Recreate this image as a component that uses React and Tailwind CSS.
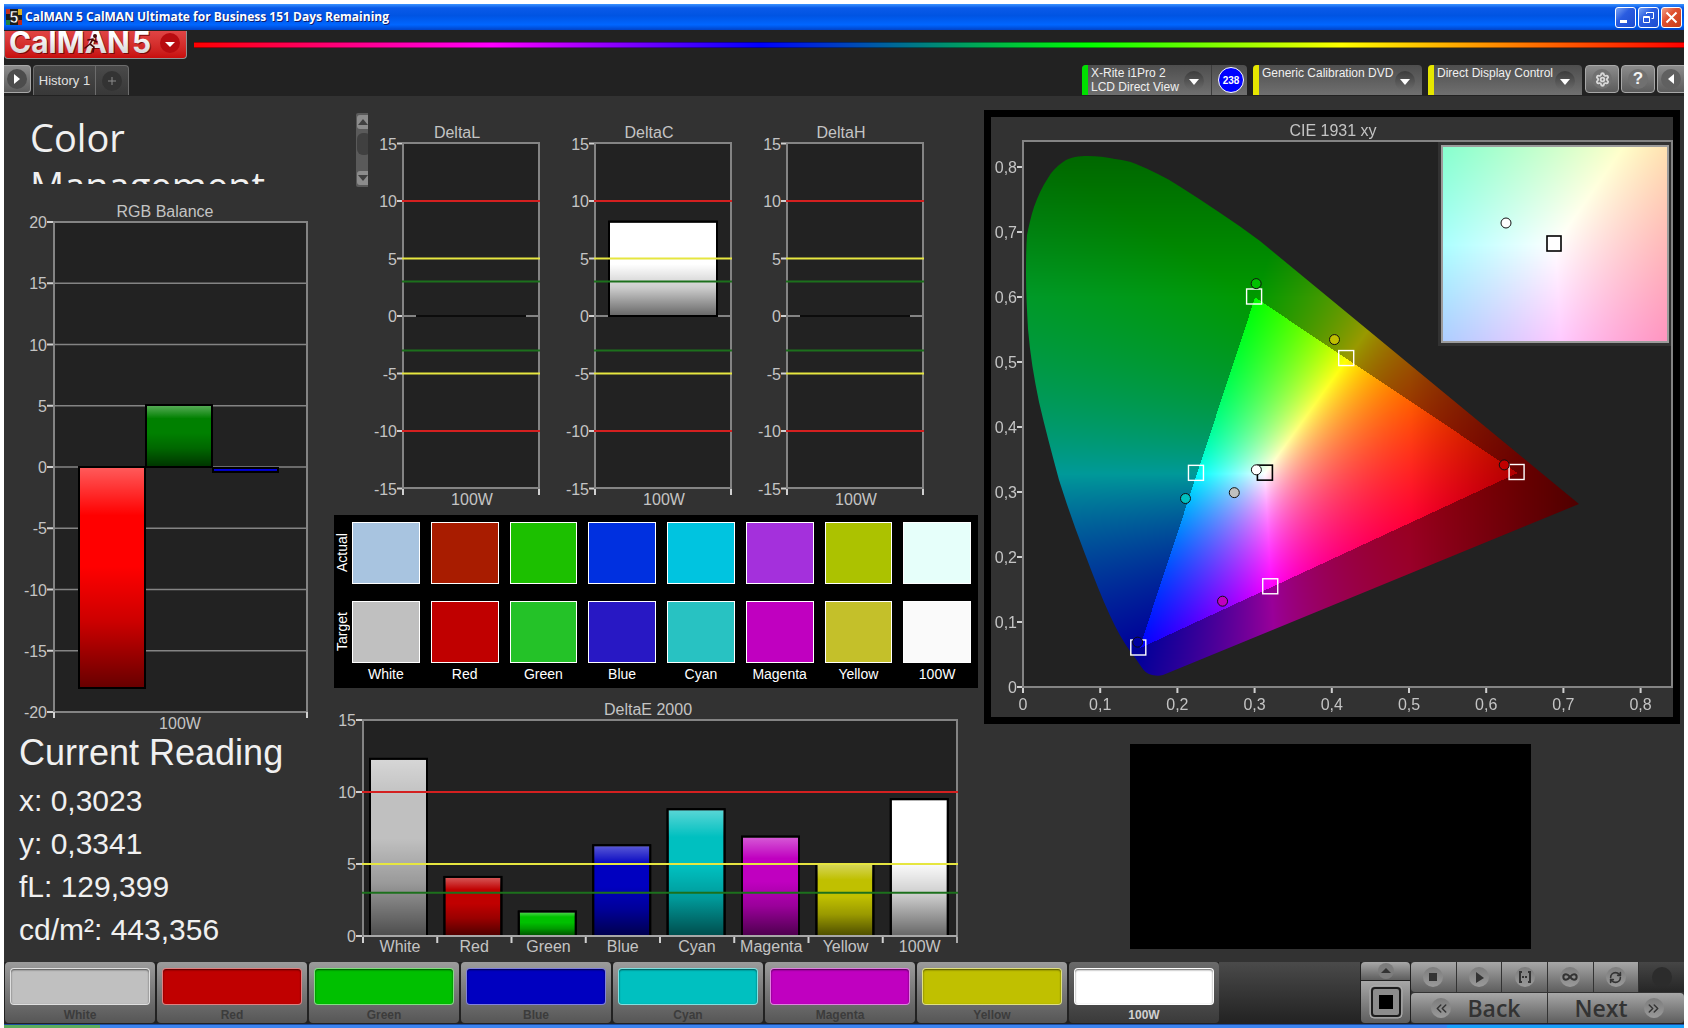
import React, { useEffect, useRef } from 'react';
import { Settings, Infinity as Loop, RefreshCw, ChevronsLeft, ChevronsRight } from 'lucide-react';

const patches = [
  { name: 'White', actual: '#a8c4e0', target: '#c0c0c0', fill: '#c0c0c0', deltaE: 12.3 },
  { name: 'Red', actual: '#a81c00', target: '#c00000', fill: '#c00000', deltaE: 4.1 },
  { name: 'Green', actual: '#1cc000', target: '#24c228', fill: '#00c000', deltaE: 1.7 },
  { name: 'Blue', actual: '#0030e0', target: '#2818c4', fill: '#0000c0', deltaE: 6.3 },
  { name: 'Cyan', actual: '#00c4e0', target: '#28c2c2', fill: '#00c0c0', deltaE: 8.8 },
  { name: 'Magenta', actual: '#a430dc', target: '#c000c0', fill: '#c000c0', deltaE: 6.9 },
  { name: 'Yellow', actual: '#acc200', target: '#c4c02a', fill: '#c0c000', deltaE: 5 },
  { name: '100W', actual: '#e6fffa', target: '#fafafa', fill: '#ffffff', deltaE: 9.5 },
];

// allowed error limits, drawn over the bars
const limits = [
  { value: 10, color: '#d42020', width: 2 },
  { value: 5, color: '#e6e640', width: 2 },
  { value: 3, color: '#1c701c', width: 2 },
];

const readings = ['x: 0,3023', 'y: 0,3341', 'fL: 129,399', 'cd/m²: 443,356'];

function Shade({ id }) {
  return (
    <defs>
      <linearGradient id={id} x1="0" y1="0" x2="0" y2="1">
        <stop offset="0" stopColor="#fff" stopOpacity="0.36" />
        <stop offset="0.22" stopColor="#fff" stopOpacity="0" />
        <stop offset="0.45" stopColor="#000" stopOpacity="0" />
        <stop offset="0.7" stopColor="#000" stopOpacity="0.2" />
        <stop offset="1" stopColor="#000" stopOpacity="0.6" />
      </linearGradient>
    </defs>
  );
}

function Bar({ x, y, width, height, fill, shade }) {
  return (
    <g stroke="#000" strokeWidth="2">
      <rect x={x} y={y} width={width} height={height} fill={fill} />
      <rect x={x} y={y} width={width} height={height} fill={`url(#${shade})`} />
    </g>
  );
}

function RgbBalance() {
  const y = (v) => 267 - v * 12.25;
  const ticks = [20, 15, 10, 5, 0, -5, -10, -15, -20];
  return (
    <svg viewBox="0 0 330 535" className="block w-full mt-4 text-[16px]" fill="#c4c4c4">
      <Shade id="rgbShade" />
      <text x="161" y="17" textAnchor="middle">RGB Balance</text>
      <rect x="50" y="22" width="253" height="490" fill="#222" stroke="#848484" strokeWidth="2" />
      {ticks.map((t) => (
        <g key={t}>
          <line x1="50" x2="303" y1={y(t)} y2={y(t)} stroke="#848484" strokeWidth="1.5" />
          <line x1="43" x2="49" y1={y(t)} y2={y(t)} stroke="#d0d0d0" strokeWidth="2" />
          <text x="43" y={y(t) + 6} textAnchor="end">{t}</text>
        </g>
      ))}
      <path d="M50 512v6M303 512v6" stroke="#d0d0d0" strokeWidth="2" />
      <Bar x={75} y={267} width={66} height={221} fill="#ff0000" shade="rgbShade" />
      <Bar x={142} y={205} width={66} height={62} fill="#008000" shade="rgbShade" />
      <Bar x={209} y={268} width={65} height={4} fill="#0000e0" shade="rgbShade" />
      <text x="176" y="529" textAnchor="middle">100W</text>
    </svg>
  );
}

function DeltaChart({ title, value }) {
  const y = (v) => 203 - v * 11.5;
  return (
    <svg viewBox="1 0 192 397" className="block w-full text-[16px]" fill="#c4c4c4">
      <Shade id={title} />
      <text x="90" y="25" textAnchor="middle">{title}</text>
      <rect x="36" y="30" width="136" height="345" fill="#222" stroke="#848484" strokeWidth="2" />
      <line x1="36" x2="172" y1={y(0)} y2={y(0)} stroke="#848484" strokeWidth="2" />
      {[15, 10, 5, 0, -5, -10, -15].map((t) => (
        <g key={t}>
          <line x1="30" x2="35" y1={y(t)} y2={y(t)} stroke="#d0d0d0" strokeWidth="2" />
          <text x="30" y={y(t) + 6} textAnchor="end">{t}</text>
        </g>
      ))}
      <path d="M36 376v6M172 376v6" stroke="#d0d0d0" strokeWidth="2" />
      {value > 0 ? (
        <Bar x={50} y={y(value)} width={108} height={203 - y(value)} fill="#fff" shade={title} />
      ) : (
        <line x1="49" x2="159" y1="203" y2="203" stroke="#0c0c0c" strokeWidth="2" />
      )}
      {limits.map((l) => (
        <path key={l.value} d={`M35 ${y(l.value)}H173M35 ${y(-l.value)}H173`} stroke={l.color} strokeWidth={l.width} />
      ))}
      <text x="105" y="392" textAnchor="middle">100W</text>
    </svg>
  );
}

function DeltaE() {
  const y = (v) => 243 - v * 14.4;
  return (
    <svg viewBox="1 0 650 267" className="block w-full mt-[5px] text-[16px]" fill="#c4c4c4">
      <Shade id="deltaE" />
      <text x="315" y="22" textAnchor="middle">DeltaE 2000</text>
      <rect x="30" y="27" width="594" height="216" fill="#222" stroke="#848484" strokeWidth="2" />
      {[15, 10, 5, 0].map((t) => (
        <g key={t}>
          <line x1="23" x2="29" y1={y(t)} y2={y(t)} stroke="#d0d0d0" strokeWidth="2" />
          <text x="23" y={y(t) + 6} textAnchor="end">{t}</text>
        </g>
      ))}
      {patches.map((p, i) => (
        <g key={p.name}>
          <Bar x={37 + i * 74.4} y={y(p.deltaE)} width={57} height={243 - y(p.deltaE)} fill={p.fill} shade="deltaE" />
          <line x1={30 + i * 74.25} x2={30 + i * 74.25} y1="244" y2="250" stroke="#d0d0d0" strokeWidth="2" />
          <text x={67 + i * 74.25} y="259" textAnchor="middle">{p.name}</text>
        </g>
      ))}
      <path d="M30 243H624M624 244v6" stroke="#a8a8a8" strokeWidth="2" />
      {limits.map((l) => (
        <line key={l.value} x1="29" x2="625" y1={y(l.value)} y2={y(l.value)} stroke={l.color} strokeWidth={l.width} />
      ))}
    </svg>
  );
}

const LOCUS =
  'M97 39C92 39 88 39 84 40C80 41 76 42 72 45C66 49 61 54 57 61C51 70 47 79 43 90C40 99 38 108 36 118' +
  'C35 131 35 145 35 158C35 176 36 194 37 212C39 237 43 261 48 285C54 311 61 337 68 363C78 395 90 427 102 458' +
  'C109 476 116 493 124 509C130 521 137 532 145 542C149 548 153 555 158 557C163 559 168 559 172 558' +
  'L588 387L269 124C242 104 215 86 188 69C174 60 160 53 145 47C138 44 131 43 124 42C115 40 106 39 97 39Z';

// chromaticity to plot position
const px = (x) => 32 + 772 * x;
const py = (y) => 570 - 650 * y;

function xyToRgb(x, y) {
  const X = x / y;
  const Z = (1 - x - y) / y;
  const rgb = [
    3.2406 * X - 1.5372 - 0.4986 * Z,
    -0.9689 * X + 1.8758 + 0.0415 * Z,
    0.0557 * X - 0.204 + 1.057 * Z,
  ];
  const max = Math.max(...rgb);
  return rgb.map((c) => Math.max(0, c / max));
}

function inGamut(x, y) {
  const side = (ax, ay, bx, by) => (bx - ax) * (y - ay) - (by - ay) * (x - ax) >= 0;
  return side(0.64, 0.33, 0.3, 0.6) && side(0.3, 0.6, 0.15, 0.06) && side(0.15, 0.06, 0.64, 0.33);
}

function paint(ctx, left, top, width, height, colorAt) {
  const image = ctx.createImageData(width, height);
  for (let j = 0; j < height; j++) {
    for (let i = 0; i < width; i++) {
      const [r, g, b] = colorAt(i, j);
      const k = (j * width + i) * 4;
      image.data[k] = r * 255;
      image.data[k + 1] = g * 255;
      image.data[k + 2] = b * 255;
      image.data[k + 3] = 255;
    }
  }
  ctx.putImageData(image, left, top);
}

const targets = [
  [0.3, 0.6], [0.4193, 0.5053], [0.2247, 0.3287], [0.64, 0.33], [0.3209, 0.1542], [0.15, 0.06],
];
const measured = [
  [0.302, 0.6206, '#00c000'], [0.4035, 0.5345, '#c0c000'], [0.2737, 0.299, '#c0c0c0'], [0.2105, 0.29, '#00c0c0'],
  [0.2585, 0.132, '#c000c0'], [0.1485, 0.069, '#0000a0'], [0.6234, 0.3417, '#c00000'], [0.3023, 0.3341, '#ffffff'],
];
const axis = [0, 1, 2, 3, 4, 5, 6, 7, 8];

function CieChart() {
  const canvasRef = useRef(null);

  useEffect(() => {
    const ctx = canvasRef.current.getContext('2d');
    paint(ctx, 0, 0, 682, 600, (i, j) => {
      const x = (i - 32) / 772;
      const y = Math.max(0.005, (570 - j) / 650);
      let k = inGamut(x, y) ? 1 : 0.6;
      if (x > 0.5) k *= 1 - 2.2 * (x - 0.5);
      if (y > 0.6) k *= 1 - 1.5 * (y - 0.6);
      return xyToRgb(x, y).map((c) => c * k);
    });
    ctx.globalCompositeOperation = 'destination-in';
    ctx.fill(new Path2D(LOCUS));
    // close-up around the white point
    paint(ctx, 451, 29, 226, 196, (i, j) =>
      xyToRgb(0.3127 + ((i - 113) / 113) * 0.0247, 0.329 - ((j - 98) / 98) * 0.0247)
    );
  }, []);

  return (
    <div className="grid border-[7px] border-black bg-[#323232]">
      <svg viewBox="0 0 682 600" className="block w-full [grid-area:1/1]">
        <rect x="32" y="24" width="650" height="546" fill="#222" />
        <rect x="447" y="25" width="235" height="204" fill="#323232" />
      </svg>
      <canvas ref={canvasRef} width="682" height="600" className="block w-full [grid-area:1/1]" />
      <svg viewBox="0 0 682 600" className="block w-full [grid-area:1/1] text-[16px]" fill="#c4c4c4">
        <text x="342" y="19" textAnchor="middle">CIE 1931 xy</text>
        <rect x="32" y="24" width="649" height="546" fill="none" stroke="#848484" strokeWidth="2" />
        <rect x="451" y="29" width="226" height="196" fill="none" stroke="#9c9c9c" strokeWidth="2" />
        {axis.map((n) => (
          <g key={n}>
            <path d={`M26 ${py(n / 10)}h5M${px(n / 10)} 571v5`} stroke="#d0d0d0" strokeWidth="2" />
            <text x="26" y={py(n / 10) + 6} textAnchor="end">{n ? `0,${n}` : '0'}</text>
            <text x={px(n / 10)} y="593" textAnchor="middle">{n ? `0,${n}` : '0'}</text>
          </g>
        ))}
        {targets.map(([x, y]) => (
          <rect key={x} x={px(x) - 8} y={py(y) - 8} width="15" height="15" fill="none" stroke="#fff" strokeWidth="1.4" />
        ))}
        <rect x={px(0.3127) - 7} y={py(0.329) - 8} width="15" height="15" fill="none" stroke="#000" strokeWidth="1.6" />
        {measured.map(([x, y, fill]) => (
          <circle key={x} cx={px(x)} cy={py(y)} r="5" fill={fill} stroke="#111" />
        ))}
        <rect x="556" y="119" width="14" height="15" fill="#fff" stroke="#000" strokeWidth="1.6" />
        <circle cx="515" cy="106" r="5" fill="#fff" stroke="#111" />
      </svg>
    </div>
  );
}

function SwatchRow({ label, field }) {
  return (
    <div className="flex">
      <div className="w-4 mr-[2px] flex items-center justify-center text-[14px] leading-4 text-white [writing-mode:vertical-rl] rotate-180">
        {label}
      </div>
      <div className="flex-1 grid grid-cols-8 gap-[11px]">
        {patches.map((p) => (
          <div key={p.name} className="h-[62px] border border-white" style={{ backgroundColor: p[field] }} />
        ))}
      </div>
    </div>
  );
}

function ComparePanel() {
  return (
    <div className="mt-[5px] mr-[6px] h-[173px] bg-black pt-[7px] pr-[7px]">
      <SwatchRow label="Actual" field="actual" />
      <div className="h-[17px]" />
      <SwatchRow label="Target" field="target" />
      <div className="ml-[18px] mt-[3px] grid grid-cols-8 gap-[11px] text-center text-[14px] leading-4 text-white">
        {patches.map((p) => (
          <span key={p.name} className="whitespace-nowrap">{p.name}</span>
        ))}
      </div>
    </div>
  );
}

function TitleBar() {
  return (
    <header className="flex items-center h-[26px] px-[2px] bg-[linear-gradient(#3a93ff,#0a5ae8_15%,#0054e3_45%,#0066ff_80%,#0043c8)]">
      <svg viewBox="0 0 16 16" className="w-4 h-4">
        <rect width="16" height="16" fill="#1c1c1c" />
        <path d="M0 0h4v5H0z" fill="#c03020" />
        <path d="M12 0h4v6h-4z" fill="#d8b020" />
        <path d="M0 11h4v5H0z" fill="#208040" />
        <path d="M12 11h4v5h-4z" fill="#c02818" />
        <text x="8" y="14" textAnchor="middle" fontSize="16" fontWeight="bold" fill="#fff" stroke="#000" strokeWidth="0.5">5</text>
      </svg>
      <h1 className="ml-[3px] flex-1 font-['Open_Sans',sans-serif] text-[12px] font-bold text-white [text-shadow:1px_1px_0_#0a1c70]">
        CalMAN 5 CalMAN Ultimate for Business 151 Days Remaining
      </h1>
      <div className="flex gap-[2px]">
        <button aria-label="Minimize" className="w-[21px] h-[21px] rounded-[3px] border border-white bg-[linear-gradient(135deg,#7ba4f4,#2a5ce0_40%,#1c4cd0)]">
          <svg viewBox="0 0 19 19"><path d="M4 12h7v3H4z" fill="#fff" /></svg>
        </button>
        <button aria-label="Restore" className="w-[21px] h-[21px] rounded-[3px] border border-white bg-[linear-gradient(135deg,#7ba4f4,#2a5ce0_40%,#1c4cd0)]">
          <svg viewBox="0 0 19 19" fill="none" stroke="#fff">
            <path d="M7.500 6V4.500h7v6h-2M7.500 4.500h7" />
            <path d="M4.500 8.500h6v6h-6zM4.500 9.500h6" />
          </svg>
        </button>
        <button aria-label="Close" className="w-[21px] h-[21px] rounded-[3px] border border-white bg-[linear-gradient(135deg,#f0a088,#e05030_40%,#c83c18)]">
          <svg viewBox="0 0 19 19"><path d="M4.500 4.500l10 10M14.500 4.500l-10 10" stroke="#fff" strokeWidth="2" /></svg>
        </button>
      </div>
    </header>
  );
}

function Drop() {
  return (
    <svg viewBox="0 0 20 20" className="w-5 h-5 shrink-0">
      <defs>
        <linearGradient id="drop" x1="0" y1="0" x2="0" y2="1">
          <stop offset="0" stopColor="#3c3c3c" />
          <stop offset="1" stopColor="#6c6c6c" />
        </linearGradient>
      </defs>
      <circle cx="10" cy="10" r="10" fill="url(#drop)" />
      <path d="M5 8h10l-5 6z" fill="#fff" />
    </svg>
  );
}

function Device({ lines, stripe, className, children }) {
  return (
    <div className={`flex h-[30px] rounded-t-[4px] overflow-hidden bg-linear-to-b from-[#4e4e4e] to-[#707070] ${className}`}>
      <div className={`w-[6px] ${stripe}`} />
      <button className="flex flex-1 justify-between pl-[3px] pr-[7px] text-left text-[12px] leading-[14px] text-[#f0f0f0] whitespace-nowrap">
        <span className="pt-px">{lines.map((l) => <span key={l} className="block">{l}</span>)}</span>
        <span className="pt-[6px]"><Drop /></span>
      </button>
      {children}
    </div>
  );
}

const toolButton =
  'flex items-center justify-center h-7 border border-[#a8a8a8] bg-linear-to-b from-[#8c8c8c] to-[#5c5c5c]';

function Toolbar() {
  return (
    <div className="bg-[#222] h-[66px] pt-px">
      <div className="flex items-start">
        <button aria-label="CalMAN 5 menu" className="block w-[183px] h-7 rounded-b-[4px] border border-t-0 border-[#909090] bg-linear-to-b from-[#e04444] to-[#c80c0c] overflow-hidden">
          <svg viewBox="0 0 181 27" className="block w-full">
            <defs>
              <linearGradient id="logo" x1="0" y1="0" x2="0" y2="1">
                <stop offset="0.3" stopColor="#fff" />
                <stop offset="1" stopColor="#c8c8c8" />
              </linearGradient>
            </defs>
            <g className="font-['Inter',sans-serif]" fontWeight="700" fontSize="30">
              <g fill="#7c0808" transform="translate(1 1)">
                <text x="4" y="22">CalMAN</text>
                <text x="127" y="22">5</text>
              </g>
              <g fill="url(#logo)">
                <text x="4" y="22">CalMAN</text>
                <text x="127" y="22">5</text>
              </g>
            </g>
            <g fill="none" stroke="#4c0808" strokeWidth="1.6" strokeLinecap="round">
              <circle cx="90" cy="5" r="1.200" fill="#4c0808" />
              <path d="M88 8l-3 5 4 3-1 5M85 13l-5 4M88 8l-5 1M88 9l4 2" />
            </g>
            <circle cx="165" cy="12" r="10" fill="#b80c10" />
            <path d="M160 11h10l-5 5z" fill="#fff" />
          </svg>
        </button>
        <div className="ml-[7px] mt-[11px] flex-1 h-[6px] border-y border-black/40 bg-[linear-gradient(90deg,#ff0000,#ff00ff_20%,#0000ff_38%,#00ff00_60%,#ffff00_77%,#ff0000)]" />
      </div>
      <div className="mt-[6px] flex items-start">
        <button aria-label="Expand" className={`${toolButton} w-[27px] rounded-r-[4px] border-l-0`}>
          <svg viewBox="0 0 20 20" className="w-5 h-5">
            <circle cx="10" cy="10" r="10" fill="#4c4c4c" />
            <path d="M7 5v10l6-5z" fill="#fff" />
          </svg>
        </button>
        <nav className="ml-[2px] flex h-[30px] rounded-t-[4px] border border-b-0 border-[#6c6c6c] bg-linear-to-b from-[#4a4a4a] to-[#383838] text-[13px] text-[#e0e0e0]">
          <button className="w-[62px] border-r border-[#6c6c6c] whitespace-nowrap">History 1</button>
          <button aria-label="Add tab" className="flex items-center justify-center w-8">
            <svg viewBox="0 0 20 20" className="w-5 h-5">
              <circle cx="10" cy="10" r="10" fill="#333" />
              <path d="M6 10h8M10 6v8" stroke="#8c8c8c" />
            </svg>
          </button>
        </nav>
        <div className="ml-auto flex items-start">
          <Device lines={['X-Rite i1Pro 2', 'LCD Direct View']} stripe="bg-[#00e000]" className="w-[165px]">
            <div className="flex items-center justify-center w-[36px] pl-[3px] border-l border-[#3c3c3c]">
              <span className="flex items-center justify-center w-[26px] h-[26px] rounded-full border border-white bg-[#0000ff] text-[10px] font-bold text-white">238</span>
            </div>
          </Device>
          <Device lines={['Generic Calibration DVD']} stripe="bg-[#e6e600]" className="w-[169px] ml-[6px]" />
          <Device lines={['Direct Display Control']} stripe="bg-[#e6e600]" className="w-[154px] ml-[6px]" />
          <button aria-label="Settings" className={`${toolButton} w-[34px] ml-[3px] rounded-[4px]`}>
            <span className="flex items-center justify-center w-5 h-5 rounded-full bg-[#707070]">
              <Settings size={15} color="#d8d8d8" strokeWidth={3} />
            </span>
          </button>
          <button className={`${toolButton} w-[34px] ml-[2px] rounded-[4px]`}>
            <span className="flex items-center justify-center w-5 h-5 rounded-full bg-[#707070] text-[17px] font-bold text-[#f4f4f4]">?</span>
          </button>
          <button aria-label="Collapse" className={`${toolButton} w-[27px] ml-[2px] rounded-l-[4px] border-r-0`}>
            <svg viewBox="0 0 20 20" className="w-5 h-5">
              <circle cx="10" cy="10" r="10" fill="#606060" />
              <path d="M13 5v10l-6-5z" fill="#fff" />
            </svg>
          </button>
        </div>
      </div>
    </div>
  );
}

function ScrollBar() {
  return (
    <svg viewBox="0 0 12 74" className="block w-3 h-[74px] ml-[22px] shrink-0">
      <rect width="14" height="74" rx="2" fill="#5a5a5a" />
      <rect x="1" y="2" width="14" height="14" rx="3" fill="#8c8c8c" />
      <path d="M2 12l5-6 5 6z" fill="#404040" />
      <rect x="1" y="20" width="14" height="22" rx="6" fill="#404040" />
      <rect x="1" y="58" width="14" height="14" rx="3" fill="#8c8c8c" />
      <path d="M2 62l5 6 5-6z" fill="#404040" />
    </svg>
  );
}

function PatchButton({ patch, active }) {
  return (
    <button
      className={`w-[150px] h-[61px] rounded-[4px] px-[5px] pt-[5px] text-[12px] font-bold leading-[14px] bg-linear-to-b ${
        active ? 'from-[#6a6a6a] to-[#3a3a3a] text-[#d0d0d0]' : 'from-[#9c9c9c] to-[#565656] text-[#3c3c3c]'
      }`}
    >
      <span className="block h-[37px] rounded-[4px] border border-white/50 shadow-[inset_0_1px_2px_rgba(0,0,0,0.6)]" style={{ backgroundColor: patch.fill }} />
      <span className="block mt-[3px]">{patch.name}</span>
    </button>
  );
}

const mediaButton = 'flex items-center justify-center bg-linear-to-b from-[#a8a8a8] to-[#5e5e5e]';
const disc = 'flex items-center justify-center w-5 h-5 rounded-full bg-linear-to-b from-[#7c7c7c] to-[#9a9a9a]';

function Footer() {
  return (
    <footer className="flex h-[62px] bg-[#222] pl-px">
      <div className="flex gap-[2px]">
        {patches.map((p) => <PatchButton key={p.name} patch={p} active={p.name === '100W'} />)}
      </div>
      <div className="flex-1 bg-linear-to-b from-[#4a4a4a] to-[#222]" />
      <div className="flex flex-col gap-px w-[49px] h-[61px] ml-px">
        <button aria-label="Open" className={`${mediaButton} h-[18px] rounded-t-[4px]`}>
          <svg viewBox="0 0 16 16" className="w-4 h-4">
            <circle cx="8" cy="8" r="8" fill="#7c7c7c" />
            <path d="M3 10l5-5 5 5z" fill="#333" />
          </svg>
        </button>
        <button aria-label="Window pattern" className={`${mediaButton} flex-1 rounded-b-[4px]`}>
          <svg viewBox="0 0 34 34" className="w-[34px] h-[34px]">
            <rect x="1" y="1" width="32" height="32" rx="4" fill="#8c8c8c" stroke="#b0b0b0" />
            <rect x="3" y="3" width="28" height="28" rx="3" fill="#8c8c8c" stroke="#1c1c1c" strokeWidth="2" />
            <rect x="10" y="10" width="14" height="14" fill="#000" />
          </svg>
        </button>
      </div>
      <div className="ml-px w-[273px] h-[61px] flex flex-col gap-px bg-[#333]">
        <div className="grid grid-cols-6 gap-px h-[30px]">
          <button aria-label="Stop" className={`${mediaButton} rounded-l-[4px]`}>
            <span className={disc}><span className="w-2 h-2 bg-[#333]" /></span>
          </button>
          <button aria-label="Play" className={mediaButton}>
            <span className={disc}><svg viewBox="0 0 20 20" className="w-5 h-5"><path d="M7 5v11l8-5z" fill="#333" /></svg></span>
          </button>
          <button aria-label="Read series" className={mediaButton}>
            <span className={disc}>
              <svg viewBox="0 0 20 20" className="w-5 h-5" fill="none" stroke="#333" strokeWidth="2">
                <path d="M7 5H5v10h2M13 5h2v10h-2" />
                <path d="M7 10h6" strokeDasharray="2 1" />
              </svg>
            </span>
          </button>
          <button aria-label="Continuous" className={mediaButton}><span className={disc}><Loop size={16} color="#333" strokeWidth={3} /></span></button>
          <button aria-label="Refresh" className={mediaButton}><span className={disc}><RefreshCw size={13} color="#333" strokeWidth={3} /></span></button>
          <button aria-label="Record" className="flex items-center justify-center bg-linear-to-b from-[#464646] to-[#262626]">
            <span className="w-5 h-5 rounded-full bg-[#2c2c2c]" />
          </button>
        </div>
        <div className="grid grid-cols-2 gap-px flex-1 font-['Open_Sans',sans-serif] text-[23px] leading-[28px] font-semibold text-[#333]">
          <button className={`${mediaButton} gap-[16px] pr-[6px] rounded-l-[4px]`}>
            <span className={disc}><ChevronsLeft size={17} /></span>
            Back
          </button>
          <button className={`${mediaButton} gap-[16px] pl-[6px] rounded-r-[4px]`}>
            Next
            <span className={disc}><ChevronsRight size={17} /></span>
          </button>
        </div>
      </div>
    </footer>
  );
}

export default function App() {
  return (
    <div className="flex flex-col min-h-screen bg-white px-1 pt-1 font-['Liberation_Sans',Arial,sans-serif]">
      <TitleBar />
      <Toolbar />
      <main className="flex-1 grid grid-cols-[330fr_650fr_700fr] items-start bg-[#323232]">
        <section>
          <h2 className="mt-[17px] h-[71px] overflow-hidden pl-[26px] font-['Open_Sans',sans-serif] text-[38px] leading-[48px] text-[#f0f0f0]">
            Color<br />Management
          </h2>
          <RgbBalance />
          <div className="pl-[15px] text-[#f0f0f0]">
            <h3 className="text-[36px] leading-[36px] whitespace-nowrap">Current Reading</h3>
            <div className="mt-[8px] text-[30px] leading-[43px]">
              {readings.map((r) => <p key={r}>{r}</p>)}
            </div>
          </div>
        </section>
        <section className="pt-[17px]">
          <div className="flex">
            <ScrollBar />
            <div className="flex-1 grid grid-cols-3 mr-10">
              <DeltaChart title="DeltaL" value={0} />
              <DeltaChart title="DeltaC" value={8.2} />
              <DeltaChart title="DeltaH" value={0} />
            </div>
          </div>
          <ComparePanel />
          <DeltaE />
        </section>
        <section className="pt-[14px] pr-1">
          <CieChart />
          <div className="mt-5 ml-[146px] w-[401px] h-[205px] bg-black" />
        </section>
      </main>
      <Footer />
      <div className="flex h-[4px] border-t border-[#1c4ca0] bg-[#3c84f0]">
        <div className="w-24 bg-[#5cac5c]" />
        <div className="ml-auto w-[237px] bg-[#18a0f8]" />
      </div>
    </div>
  );
}
